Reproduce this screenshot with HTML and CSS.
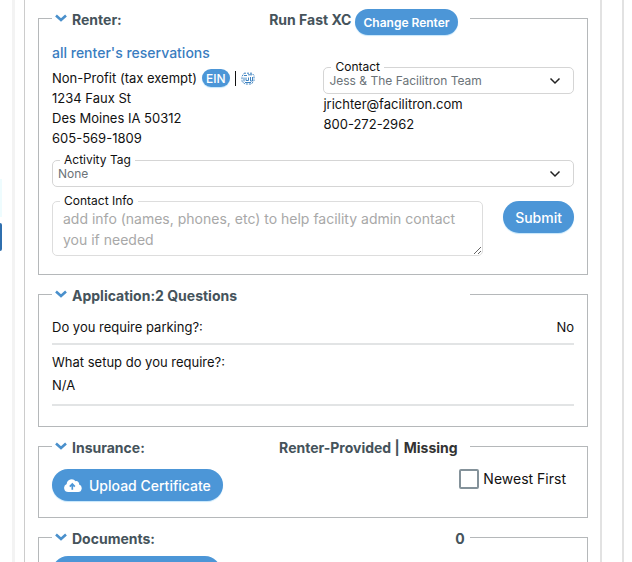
FILE: index.html
```
<!DOCTYPE html>
<html lang="en">
<head>
<meta charset="UTF-8">
<meta name="viewport" content="width=device-width, initial-scale=1.0">
<title>Reservation</title>
<link rel="stylesheet" href="styles.css">
</head>
<body>

<div class="page">
  <aside class="side-left">
    <div class="side-note"></div>
    <div class="side-tab"></div>
  </aside>

  <main class="panel">

    <!-- Renter -->
    <fieldset class="section">
      <legend class="section-title">
        <svg class="toggle" viewBox="0 0 12 8"><path d="M1 1.5 L6 6 L11 1.5"/></svg>
        <span>Renter:</span>
        <span class="title-end">Run Fast XC <button class="btn btn-small" type="button">Change Renter</button></span>
      </legend>

      <div class="renter">
        <div class="renter-info">
          <a class="all-link" href="#">all renter's reservations</a>
          <div class="tax-row">
            <span>Non-Profit (tax exempt)</span>
            <button class="btn btn-ein" type="button">EIN</button>
            <span class="bar"></span>
            <a class="stamp" href="#" aria-label="Tax document">
              <svg viewBox="0 0 14 13" width="14" height="13">
                <path class="stamp-ring" d="M3 1.2 H11 L13 3.5 V8.5 L10.5 12 H4 L1 9.5 V4.5 Z"/>
                <path d="M3 3.5 H6 M7 2.8 H11 M3 5.5 V9.5 M5 5.5 V8.5 H7.5 V5.5 M9.5 5 V9 H11.5 V5 M4 10.5 H10"/>
              </svg>
            </a>
          </div>
          <div>1234 Faux St</div>
          <div>Des Moines IA 50312</div>
          <div>605-569-1809</div>
        </div>
        <div class="renter-contact">
          <div class="field">
            <label for="contact">Contact</label>
            <select id="contact"><option>Jess &amp; The Facilitron Team</option></select>
            <svg class="caret" viewBox="0 0 12 8"><path d="M1.5 1.5 L6 6 L10.5 1.5"/></svg>
          </div>
          <div>jrichter@facilitron.com</div>
          <div>800-272-2962</div>
        </div>
      </div>

      <div class="field field-tag">
        <label for="tag">Activity Tag</label>
        <select id="tag"><option>None</option></select>
        <svg class="caret" viewBox="0 0 12 8"><path d="M1.5 1.5 L6 6 L10.5 1.5"/></svg>
      </div>

      <div class="info-row">
        <div class="field field-info">
          <label for="info">Contact Info</label>
          <textarea id="info" placeholder="add info (names, phones, etc) to help facility admin contact you if needed"></textarea>
        </div>
        <button class="btn" type="button">Submit</button>
      </div>
    </fieldset>

    <!-- Application -->
    <fieldset class="section">
      <legend class="section-title">
        <svg class="toggle" viewBox="0 0 12 8"><path d="M1 1.5 L6 6 L11 1.5"/></svg>
        <span>Application:2 Questions</span>
      </legend>
      <div class="question question-inline">
        <span>Do you require parking?:</span>
        <span>No</span>
      </div>
      <div class="question question-last">
        <div>What setup do you require?:</div>
        <div>N/A</div>
      </div>
    </fieldset>

    <!-- Insurance -->
    <fieldset class="section">
      <legend class="section-title">
        <svg class="toggle" viewBox="0 0 12 8"><path d="M1 1.5 L6 6 L11 1.5"/></svg>
        <span>Insurance:</span>
        <span class="title-end">Renter-Provided | <span class="missing">Missing</span></span>
      </legend>
      <div class="insurance">
        <button class="btn btn-upload" type="button">
          <svg viewBox="0 0 18 13" width="18" height="13">
            <path class="cloud" d="M4.2 13 A4.1 4.1 0 0 1 2.7 5.1 A5 5 0 0 1 11.6 2.2 A2.9 2.9 0 0 1 15.1 5.6 A3.8 3.8 0 0 1 14.2 13 Z"/>
            <path class="arrow" d="M8.3 10.8 V6 M5.8 7.6 L8.3 5 L10.8 7.6"/>
          </svg>
          Upload Certificate
        </button>
        <label class="newest"><input type="checkbox"> Newest First</label>
      </div>
    </fieldset>

    <!-- Documents -->
    <fieldset class="section">
      <legend class="section-title">
        <svg class="toggle" viewBox="0 0 12 8"><path d="M1 1.5 L6 6 L11 1.5"/></svg>
        <span>Documents:</span>
        <span class="title-end title-count">0</span>
      </legend>
      <div class="documents">
        <button class="btn btn-upload" type="button">
          <svg viewBox="0 0 18 13" width="18" height="13">
            <path class="cloud" d="M4.2 13 A4.1 4.1 0 0 1 2.7 5.1 A5 5 0 0 1 11.6 2.2 A2.9 2.9 0 0 1 15.1 5.6 A3.8 3.8 0 0 1 14.2 13 Z"/>
            <path class="arrow" d="M8.3 10.8 V6 M5.8 7.6 L8.3 5 L10.8 7.6"/>
          </svg>
          Upload Document
        </button>
      </div>
    </fieldset>

  </main>

  <aside class="side-right"></aside>
</div>

</body>
</html>
```
FILE: styles.css
```
* {
  box-sizing: border-box;
}
body {
  margin: 0;
  background: #fff;
  color: #111;
  font-family: Inter, "Liberation Sans", sans-serif;
  font-size: 13px;
  line-height: 20px;
}
.page {
  display: flex;
  height: 100vh;
  overflow: hidden;
}

/* edges of the neighbouring columns */
.side-left {
  width: 15px;
  padding-top: 179px;
  border-right: 3px solid #f3f3f3;
}
.side-note {
  width: 2px;
  height: 38px;
  margin-bottom: 6px;
  background: #eefcfe;
}
.side-tab {
  width: 2px;
  height: 28px;
  background: #2f6fae;
  border-radius: 0 2px 2px 0;
}
.side-right {
  width: 10px;
  border-left: 2px solid #e2e2e2;
}
.panel {
  flex: 1;
  margin: 0 20px 0 9px;
  padding: 8px 12px 8px 13px;
  border-left: 1px solid #ccc;
  border-right: 2px solid #e2e2e2;
}

.section {
  min-width: 0;
  margin: 0 0 9px;
  padding: 0 13px;
  border: 1px solid #b5b8ba;
}
.section-title {
  display: flex;
  align-items: center;
  gap: 5px;
  width: 80%;
  height: 21px;
  padding: 3px 12px 0 3px;
  color: #45535b;
  font-size: 14px;
  font-weight: 700;
  white-space: nowrap;
}
.title-end {
  display: flex;
  align-items: center;
  gap: 4px;
  margin-left: auto;
}
.title-count {
  margin-right: -7px;
}
.missing {
  color: #333;
}
.toggle {
  width: 12px;
  height: 8px;
  margin-bottom: 4px;
  fill: none;
  stroke: #4a90cc;
  stroke-width: 2.6;
}

.btn {
  height: 32px;
  padding: 0 12px;
  border: 0;
  border-radius: 16px;
  background: #4c96d7;
  box-shadow: 0 1px 1px #c5e6fb;
  color: #fff;
  font-family: inherit;
  font-size: 14px;
  font-weight: 500;
  white-space: nowrap;
}
.btn-small {
  height: 26px;
  padding: 0 8px;
  margin-top: 4px;
  font-size: 12px;
  font-weight: 600;
}
.btn-ein {
  height: 18px;
  padding: 0 4px;
  font-size: 12px;
}
.btn-upload {
  display: flex;
  align-items: center;
  gap: 7px;
}
.cloud {
  fill: #fff;
}
.arrow {
  fill: none;
  stroke: #4c96d7;
  stroke-width: 1.7;
}

.renter {
  display: grid;
  grid-template-columns: 52% 48%;
  padding-top: 14px;
}
.all-link {
  display: block;
  margin-bottom: 5px;
  color: #3a7dbf;
  font-size: 14px;
  font-weight: 500;
  text-decoration: none;
}
.tax-row {
  display: flex;
  align-items: center;
  gap: 5px;
  white-space: nowrap;
}
.bar {
  width: 1px;
  height: 15px;
  background: #111;
}
.stamp {
  display: flex;
}
.stamp path {
  fill: none;
  stroke: #3f83c1;
}
.stamp .stamp-ring {
  stroke-dasharray: 2 1;
}
.renter-contact {
  padding-top: 24px;
}

.field {
  position: relative;
}
.field label {
  position: absolute;
  top: -7px;
  left: 8px;
  padding: 0 4px;
  background: #fff;
  font-size: 12px;
  line-height: 14px;
}
.field select {
  display: block;
  width: 100%;
  height: 27px;
  padding: 0 5px;
  border: 1px solid #d5d5d5;
  border-radius: 5px;
  background: #fff;
  color: #6b7378;
  font-family: inherit;
  font-size: 12px;
  appearance: none;
}
.caret {
  position: absolute;
  top: 10px;
  right: 13px;
  width: 12px;
  height: 8px;
  fill: none;
  stroke: #222;
  stroke-width: 1.5;
  pointer-events: none;
}
.field-tag {
  margin-top: 12px;
}
.info-row {
  display: flex;
  align-items: flex-start;
  justify-content: space-between;
  padding: 14px 0 18px;
}
.field-info {
  flex: 1;
  margin-right: 20px;
}
.field textarea {
  display: block;
  width: 100%;
  height: 55px;
  padding: 6px 10px;
  border: 1px solid #ddd;
  border-radius: 5px;
  font-family: inherit;
  font-size: 14px;
  line-height: 21px;
  overflow: hidden;
}
.field textarea::placeholder {
  color: #a8a8a8;
}

.question {
  padding: 12px 0 6px;
  border-bottom: 2px solid #e2e4e5;
}
.question-inline {
  display: flex;
  justify-content: space-between;
}
.question-last {
  display: grid;
  gap: 3px;
  margin-bottom: 20px;
  padding: 7px 0 9px;
}

.insurance {
  display: flex;
  align-items: flex-start;
  justify-content: space-between;
  padding: 12px 8px 16px 0;
}
.newest {
  display: flex;
  align-items: center;
  gap: 4px;
  font-size: 14px;
}
.newest input {
  width: 20px;
  height: 20px;
  margin: 0;
  border: 2px solid #84929a;
  border-radius: 2px;
  appearance: none;
}
.documents {
  padding: 8px 0 16px;
}
```
